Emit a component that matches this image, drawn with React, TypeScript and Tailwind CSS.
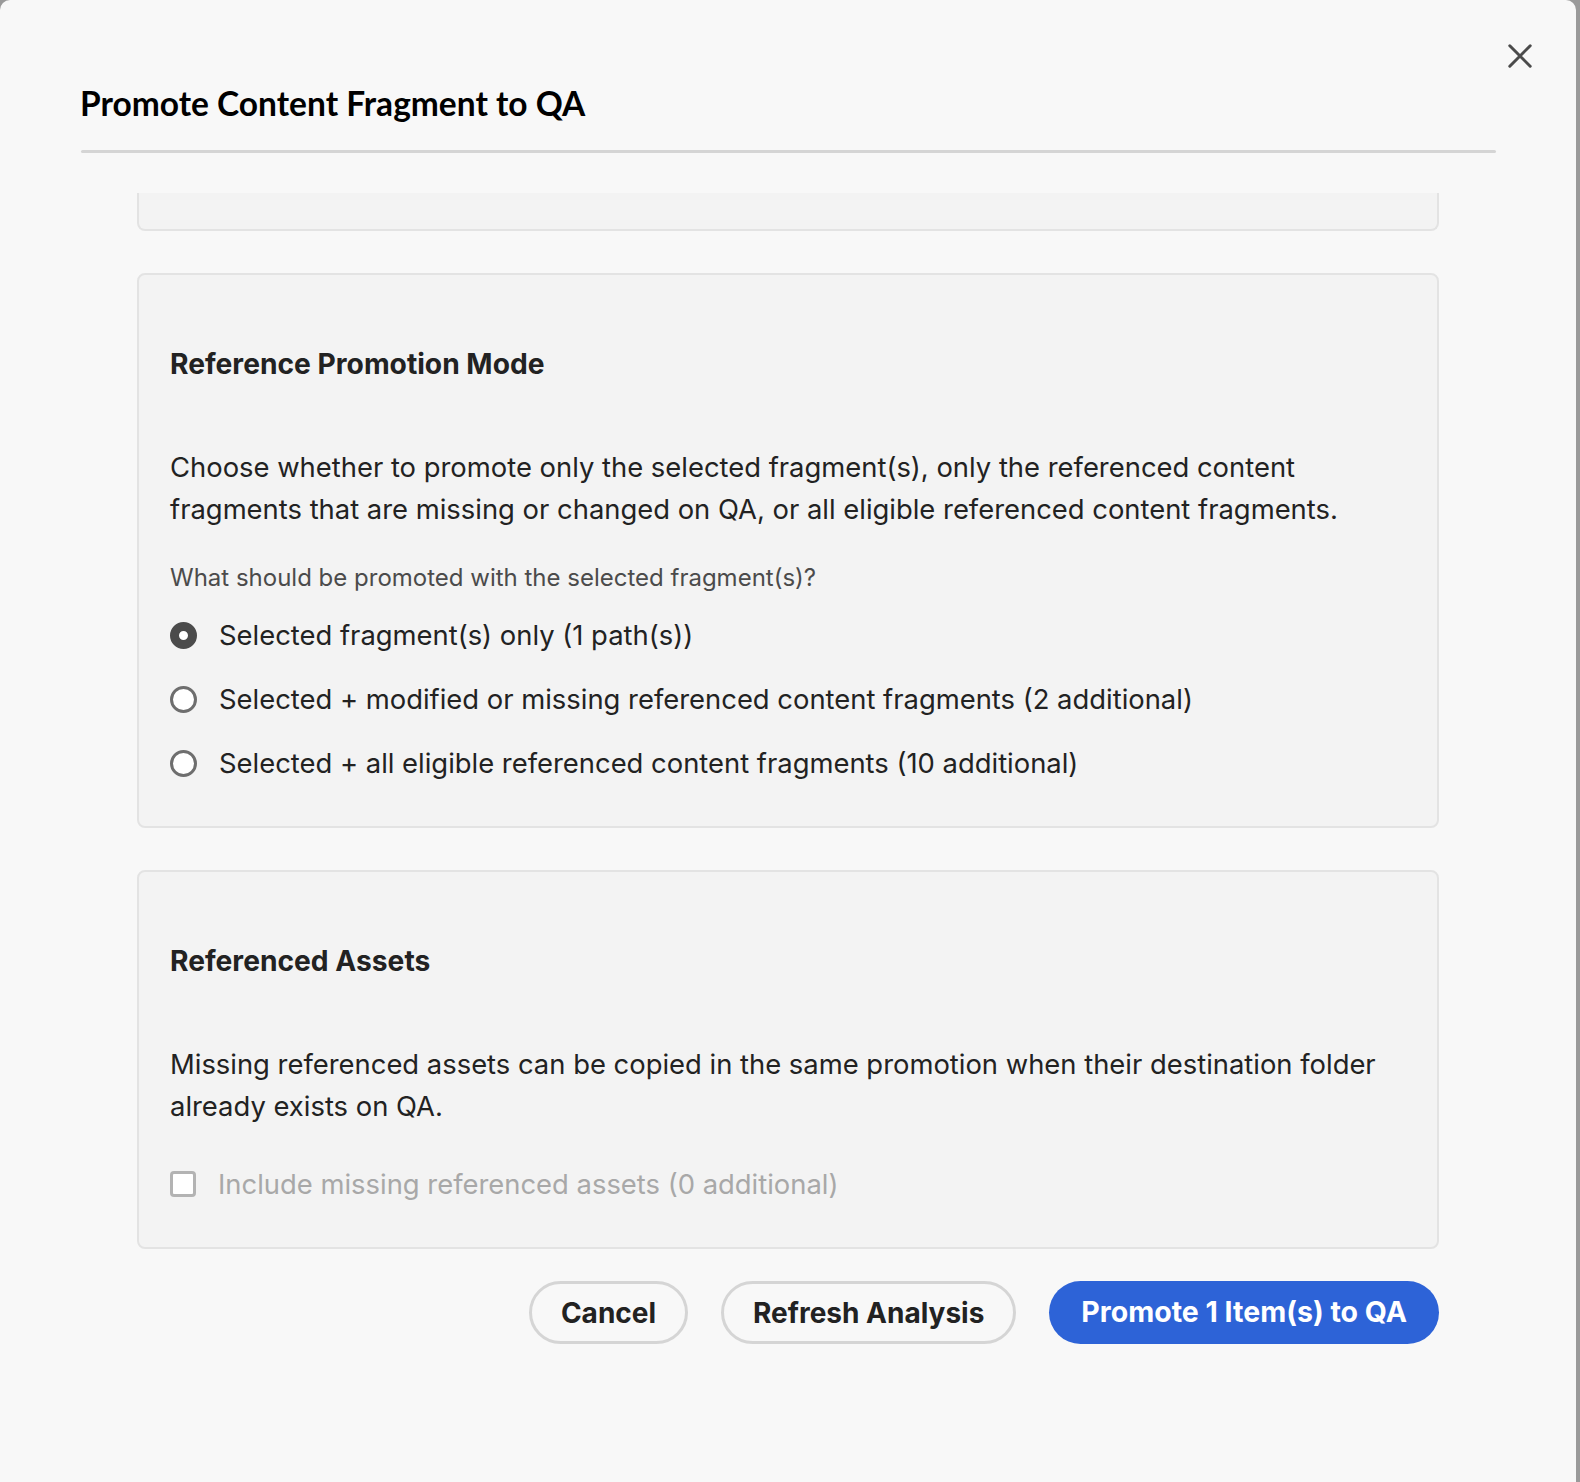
const body = "font-['Inter',sans-serif]";

function Radio({ checked, label }: { checked?: boolean; label: string }) {
  return (
    <label className="flex h-[64px] items-center gap-[22px]">
      <span
        className={
          checked
            ? "h-[27px] w-[27px] shrink-0 rounded-full border-[9px] border-[#4b4b4b] bg-white"
            : "h-[27px] w-[27px] shrink-0 rounded-full border-[3px] border-[#6e6e6e] bg-white"
        }
      />
      <span className="text-[27.4px] leading-[36px] text-[#222222]">{label}</span>
    </label>
  );
}

function Card({ children }: { children: React.ReactNode }) {
  return (
    <div className="rounded-[8px] border-2 border-[#e3e3e3] bg-[#f3f3f3] px-[31px] pb-[31px] pt-[72px]">
      {children}
    </div>
  );
}

function CloseIcon() {
  return (
    <svg width="24" height="24" viewBox="0 0 24 24" fill="none">
      <path
        d="M1.8 1.8 L22.2 22.2 M22.2 1.8 L1.8 22.2"
        stroke="#4b4b4b"
        strokeWidth="3"
        strokeLinecap="round"
      />
    </svg>
  );
}

export default function App() {
  return (
    <div className={`flex h-[1482px] w-[1580px] overflow-hidden bg-[#9a9a9a] ${body}`}>
      <div className="relative flex h-full w-[1576px] flex-col rounded-t-[10px] bg-[#f8f8f8] px-[80px]">
        {/* close */}
        <button className="absolute right-[44px] top-[44px]">
          <CloseIcon />
        </button>

        {/* header */}
        <h1 className="mt-[84px] font-['Lato',sans-serif] text-[33.5px] font-bold leading-[38px] text-black">
          Promote Content Fragment to QA
        </h1>
        <div className="ml-[1px] mt-[28px] h-[3px] rounded-full bg-[#d5d5d5]" />

        {/* scrolled content */}
        <div className="mt-[40px] flex flex-col gap-[42px] px-[57px]">
          <div className="h-[38px] rounded-b-[8px] border-2 border-t-0 border-[#e3e3e3] bg-[#f3f3f3]" />

          <Card>
            <h2 className="text-[28.2px] font-bold leading-[35px] text-[#222222]">
              Reference Promotion Mode
            </h2>
            <p className="mt-[65px] text-[27.4px] leading-[41.5px] text-[#222222]">
              Choose whether to promote only the selected fragment(s), only the referenced content
              fragments that are missing or changed on QA, or all eligible referenced content fragments.
            </p>
            <p className="mt-[33px] text-[24px] leading-[30px] text-[#4b4b4b]">
              What should be promoted with the selected fragment(s)?
            </p>
            <div className="mt-[10px] flex flex-col">
              <Radio checked label="Selected fragment(s) only (1 path(s))" />
              <Radio label="Selected + modified or missing referenced content fragments (2 additional)" />
              <Radio label="Selected + all eligible referenced content fragments (10 additional)" />
            </div>
          </Card>

          <Card>
            <h2 className="text-[28.2px] font-bold leading-[35px] text-[#222222]">
              Referenced Assets
            </h2>
            <p className="mt-[65px] text-[27.4px] leading-[41.5px] text-[#222222]">
              Missing referenced assets can be copied in the same promotion when their destination folder
              already exists on QA.
            </p>
            <label className="mt-[25px] flex h-[64px] items-center gap-[22px]">
              <span className="h-[26px] w-[26px] shrink-0 rounded-[4px] border-[3px] border-[#b3b3b3] bg-white" />
              <span className="text-[27.4px] leading-[36px] text-[#a8a8a8]">
                Include missing referenced assets (0 additional)
              </span>
            </label>
          </Card>
        </div>

        {/* footer */}
        <div className="mt-[32px] flex justify-end gap-[33px] pr-[57px]">
          <button className="h-[63px] rounded-full border-[3px] border-[#d5d5d5] px-[29px] text-[28px] font-bold text-[#222222]">
            Cancel
          </button>
          <button className="h-[63px] rounded-full border-[3px] border-[#d5d5d5] px-[29px] text-[28px] font-bold text-[#222222]">
            Refresh Analysis
          </button>
          <button className="h-[63px] rounded-full bg-[#2d63d7] px-[32px] text-[28.5px] font-bold text-white">
            Promote 1 Item(s) to QA
          </button>
        </div>
      </div>
      <div className="w-[4px]" />
    </div>
  );
}
